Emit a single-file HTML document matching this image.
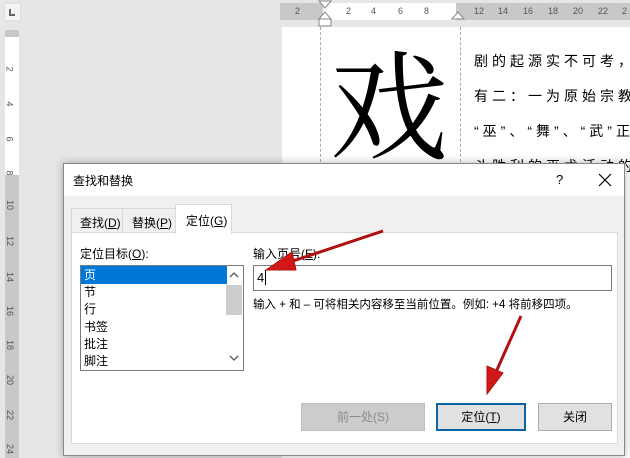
<!DOCTYPE html>
<html><head><meta charset="utf-8"><style>
*{margin:0;padding:0;box-sizing:border-box}
body{width:630px;height:458px;overflow:hidden;background:#e6e6e6;position:relative;font-family:"Liberation Sans","Noto Sans CJK SC",sans-serif;font-size:12px;color:#000}
.a{position:absolute}
.rn{position:absolute;font-size:9px;color:#555}
</style></head><body>
<div class="a" style="left:4px;top:3px;width:17px;height:18px;background:#f3f3f3;border:1px solid #ddd"></div>
<div class="a" style="left:9px;top:9px;width:6px;height:7px;border-left:2px solid #666;border-bottom:2px solid #666"></div>
<div class="a" style="left:5px;top:30px;width:14px;height:7px;background:#c8c8c8"></div>
<div class="a" style="left:5px;top:37px;width:14px;height:138px;background:#fff"></div>
<div class="a" style="left:5px;top:175px;width:14px;height:283px;background:#c8c8c8"></div>
<div class="rn" style="left:7px;top:64px;transform:rotate(90deg)">2</div>
<div class="rn" style="left:7px;top:99px;transform:rotate(90deg)">4</div>
<div class="rn" style="left:7px;top:134px;transform:rotate(90deg)">6</div>
<div class="rn" style="left:7px;top:168px;transform:rotate(90deg)">8</div>
<div class="rn" style="left:5px;top:200px;transform:rotate(90deg)">10</div>
<div class="rn" style="left:5px;top:236px;transform:rotate(90deg)">12</div>
<div class="rn" style="left:5px;top:272px;transform:rotate(90deg)">14</div>
<div class="rn" style="left:5px;top:306px;transform:rotate(90deg)">16</div>
<div class="rn" style="left:5px;top:340px;transform:rotate(90deg)">18</div>
<div class="rn" style="left:5px;top:375px;transform:rotate(90deg)">20</div>
<div class="rn" style="left:5px;top:410px;transform:rotate(90deg)">22</div>
<div class="rn" style="left:5px;top:444px;transform:rotate(90deg)">24</div>
<div class="a" style="left:280px;top:3px;width:350px;height:17px;background:#c8c8c8"></div>
<div class="a" style="left:323px;top:3px;width:133px;height:17px;background:#fff"></div>
<div class="rn" style="left:295px;top:6px">2</div>
<div class="rn" style="left:346px;top:6px">2</div>
<div class="rn" style="left:371px;top:6px">4</div>
<div class="rn" style="left:398px;top:6px">6</div>
<div class="rn" style="left:424px;top:6px">8</div>
<div class="rn" style="left:474px;top:6px">12</div>
<div class="rn" style="left:498px;top:6px">14</div>
<div class="rn" style="left:523px;top:6px">16</div>
<div class="rn" style="left:548px;top:6px">18</div>
<div class="rn" style="left:573px;top:6px">20</div>
<div class="rn" style="left:598px;top:6px">22</div>
<div class="rn" style="left:622px;top:6px">2</div>
<svg class="a" style="left:317px;top:0" width="150" height="28"><path d="M2 1h12l-6 7zM2 19l6-7 6 7zM2 19h12v7H2z" fill="#fff" stroke="#888"/><path d="M135 19l6-7 6 7z" fill="#fff" stroke="#888"/></svg>
<div class="a" style="left:282px;top:27px;width:348px;height:431px;background:#fff"></div>
<div class="a" style="left:320px;top:27px;height:140px;border-left:1px dashed #aaa"></div>
<div class="a" style="left:460px;top:27px;height:140px;border-left:1px dashed #aaa"></div>
<div class="a" style="left:330px;top:40px;font-size:118px;line-height:1;font-family:'Noto Serif CJK SC',serif">戏</div>
<div class="a" style="left:474px;top:44px;font-size:14px;letter-spacing:4px;line-height:35px;white-space:nowrap">剧的起源实不可考，<br>有二：一为原始宗教<br>“巫”、“舞”、“武”正<br>斗胜利的巫术活动的</div>
<div class="a" style="left:63px;top:163px;width:562px;height:293px;background:#f0f0f0;border:1px solid #888;box-shadow:0 0 8px rgba(0,0,0,.3)"></div>
<div class="a" style="left:64px;top:164px;width:560px;height:32px;background:#fff"></div>
<div class="a" style="left:73px;top:172px;font-size:12px">查找和替换</div>
<div class="a" style="left:556px;top:172px;font-size:13px">?</div>
<svg class="a" style="left:598px;top:173px" width="14" height="14"><path d="M1 1l12 12M13 1L1 13" stroke="#000" stroke-width="1.2"/></svg>
<div class="a" style="left:71px;top:208px;width:52px;height:25px;border:1px solid #d9d9d9;border-bottom:none;padding:5px 0 0 8px">查找(<u>D</u>)</div>
<div class="a" style="left:123px;top:208px;width:53px;height:25px;border:1px solid #d9d9d9;border-bottom:none;border-left:none;padding:5px 0 0 9px">替换(<u>P</u>)</div>
<div class="a" style="left:71px;top:232px;width:547px;height:212px;background:#fff;border:1px solid #d9d9d9"></div>
<div class="a" style="left:175px;top:204px;width:57px;height:30px;background:#fff;border:1px solid #d9d9d9;border-bottom:none;padding:7px 0 0 10px">定位(<u>G</u>)</div>
<div class="a" style="left:80px;top:245px">定位目标(<u>O</u>):</div>
<div class="a" style="left:253px;top:245px">输入页号(<u>E</u>):</div>
<div class="a" style="left:80px;top:265px;width:164px;height:106px;border:1px solid #7a7a7a;background:#fff"></div>
<div class="a" style="left:81px;top:266px;width:146px;height:18px;background:#0078d7"></div>
<div class="a" style="left:84px;top:267px;line-height:17.2px;font-size:12px;color:#000"><span style="color:#fff">页</span><br>节<br>行<br>书签<br>批注<br>脚注</div>
<div class="a" style="left:226px;top:285px;width:16px;height:30px;background:#cdcdcd"></div>
<svg class="a" style="left:229px;top:270px" width="10" height="100"><path d="M1 7l4-4 4 4M1 86l4 4 4-4" fill="none" stroke="#555" stroke-width="1.3"/></svg>
<div class="a" style="left:253px;top:265px;width:359px;height:26px;border:1px solid #7a7a7a;background:#fff;padding:4px 0 0 3px;font-size:13px">4<span style="border-left:1px solid #000;margin-left:1px"></span></div>
<div class="a" style="left:253px;top:296px;font-size:11.5px;white-space:nowrap">输入 + 和 – 可将相关内容移至当前位置。例如: +4 将前移四项。</div>
<div class="a" style="left:301px;top:403px;width:124px;height:28px;background:#ccc;border:1px solid #bfbfbf;color:#8a8a8a;text-align:center;line-height:26px">前一处(S)</div>
<div class="a" style="left:436px;top:403px;width:90px;height:28px;background:#e1e1e1;border:2px solid #0a64a8;text-align:center;line-height:24px">定位(<u>T</u>)</div>
<div class="a" style="left:538px;top:403px;width:74px;height:28px;background:#e1e1e1;border:1px solid #adadad;text-align:center;line-height:26px">关闭</div>
<svg class="a" style="left:0;top:0" width="630" height="458">
<g fill="#d01818" stroke="#b01010">
<path d="M383 231 L290 262" stroke-width="3" fill="none"/>
<path d="M266 270 L292 252 L296 270 Z"/>
<path d="M521 316 L496 372" stroke-width="3" fill="none"/>
<path d="M487 394 L487 366 L503 373 Z"/>
</g></svg>
</body></html>
